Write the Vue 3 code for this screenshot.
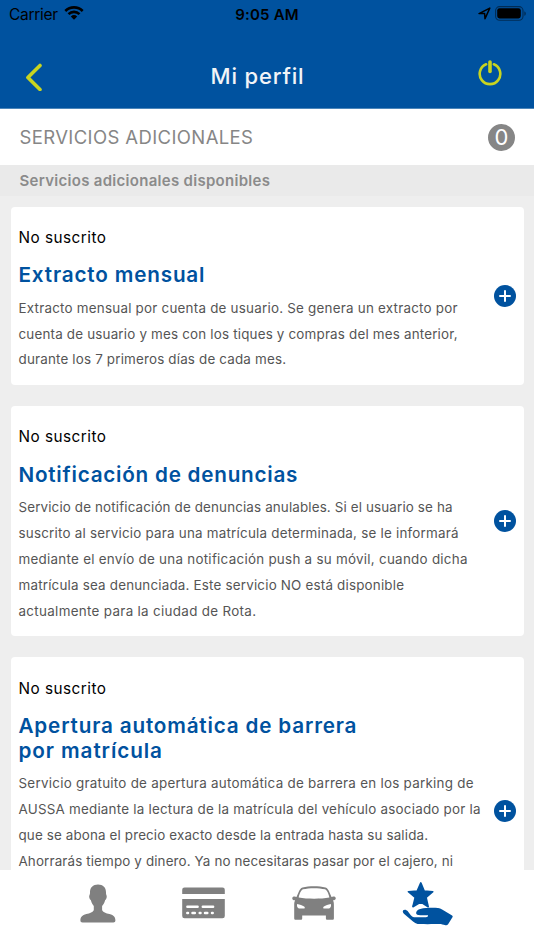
<template>
  <div class="screen">
    <header class="header">
      <div class="status-bar">
        <div class="carrier">
          <span v-fit="49">Carrier</span>
          <svg width="20" height="15" viewBox="0 0 20 15">
            <path d="M.4 4.900a13.600 13.600 0 0 1 19.200 0l-1.800 2a11.200 11.200 0 0 0-15.600 0z" />
            <path d="M3.600 8.200a9.100 9.100 0 0 1 12.800 0l-1.800 1.900a6.700 6.700 0 0 0-9.200 0z" />
            <path d="M6.800 11.400a4.700 4.700 0 0 1 6.400 0L10 14.700z" />
          </svg>
        </div>
        <span v-fit="63.5" class="time">9:05 AM</span>
        <div class="indicators">
          <svg width="13" height="13" viewBox="0 0 13 13">
            <path d="M1 6.600 11.800 1.100 7 11.800 6.600 6.600Z" fill="none" stroke="#000" stroke-width="1.5" stroke-linejoin="round" />
          </svg>
          <svg width="32" height="15" viewBox="0 0 32 15">
            <rect x=".6" y=".6" width="27.4" height="13.6" rx="4" fill="none" stroke="#002c55" stroke-width="1.1" />
            <rect x="2.2" y="2.2" width="23.6" height="10.2" rx="2.3" />
            <path d="M29.300 5.200c2 .8 2 3.800 0 4.600z" fill="#002c55" />
          </svg>
        </div>
      </div>
      <div class="nav-bar">
        <svg class="back" width="18" height="28" viewBox="0 0 18 28">
          <path d="M15 2.500 2.900 14.500 15 26.500" />
        </svg>
        <h1><span v-fit="93">Mi perfil</span></h1>
        <svg class="power" width="24" height="28" viewBox="0 0 24 28">
          <path d="M8.100 5.300a10.300 10.300 0 1 0 7.800 0" stroke-width="2.6" />
          <path d="M12 3v9.500" stroke-width="3.6" />
        </svg>
      </div>
    </header>

    <section class="summary">
      <h2><span v-fit="233.5">SERVICIOS ADICIONALES</span></h2>
      <span class="count">0</span>
    </section>
    <div class="section-label">
      <span v-fit="250.5">Servicios adicionales disponibles</span>
    </div>

    <main class="services">
      <article
        v-for="service in services"
        :key="service.id"
        class="card"
        :class="{ tall: service.tall }"
      >
        <div class="card-body">
          <p class="status"><span v-fit="87.5">No suscrito</span></p>
          <h3>
            <span v-for="line in service.title" :key="line.text" class="line">
              <span v-fit="line.width">{{ line.text }}</span>
            </span>
          </h3>
          <p class="description">
            <span v-for="line in service.description" :key="line.text" class="line">
              <span v-fit="line.width">{{ line.text }}</span>
            </span>
          </p>
        </div>
        <button class="add" type="button">
          <svg width="22" height="22" viewBox="0 0 22 22">
            <circle cx="11" cy="11" r="11" />
            <path d="M11 6v10M6 11h10" />
          </svg>
        </button>
      </article>
    </main>

    <nav class="tab-bar">
      <svg class="tab" width="36" height="39" viewBox="0 0 36 39">
        <path d="M18 .5c5 0 8.200 3 8 8.300 0 1.200.2 1.700.4 2.300.8 1.500.2 4.300-1.300 5.100-.6 2.600-1.600 4.200-3 5.700v4c.7 2.300 3.900 3.200 7.400 4.200 4.400 1.200 5.900 3.100 5.900 6.400 0 1.200-.8 2-2 2H2.500c-1.400 0-2.100-.8-2.100-2 0-3.300 1.600-5.200 6-6.400 3.500-1 6.700-1.900 7.400-4.200v-4c-1.300-1.500-2.300-3.100-2.900-5.700-1.500-.8-2.200-3.600-1.400-5.100.3-.6.500-1.100.5-2.300C9.800 3.500 13 .5 18 .5z" />
      </svg>
      <svg class="tab" width="43" height="32" viewBox="0 0 43 32">
        <path d="M2.500.5h38a2.300 2.300 0 0 1 2.300 2.300V7H.2V2.800A2.300 2.300 0 0 1 2.500.5zM.2 12h42.600v17a2.300 2.300 0 0 1-2.300 2.300h-38A2.300 2.300 0 0 1 .2 29z" />
        <path class="detail" d="M5.400 19.800h10.200M20.800 19.800h10.300M5.300 26h.7M10.500 26h2.300M17.700 26h.8M23 26h2.300M30 26h.7" />
      </svg>
      <svg class="tab" width="44" height="35" viewBox="0 0 44 35">
        <path
          fill-rule="evenodd"
          d="M10.500 1.400C17-.2 27-.2 33.500 1.400c1.800.6 2.700 2 3.400 3.700l2.600 6c1.500-.9 3.900-.6 4.200 1 .3 1.700-1 2.200-2.700 2.200.8 1.600.9 3 .9 5v12.900c0 1-.5 1.600-1.500 1.600h-5c-1 0-1.500-.6-1.500-1.600V29.500H10.200v2.700c0 1-.5 1.600-1.500 1.600h-5c-1 0-1.500-.6-1.500-1.600V19.300c0-2 .1-3.400.9-5-1.700 0-3.100-.5-2.800-2.200.3-1.600 2.700-1.900 4.200-1l2.600-6c.7-1.700 1.600-3.100 3.400-3.700zM11 3.300c-2.200.8-3.700 5.300-4.300 8.300 8.800 1.600 21.900 1.600 30.700 0-.7-3-2.100-7.500-4.400-8.300-6-1.500-16-1.500-22 0zM5.200 18c-.8 2.600.6 4.600 3 4.600h3.300c1.500 0 1.700-1.300.6-2.100C10.300 19.200 7.900 18.500 5.200 18zM38.800 18c.8 2.600-.6 4.600-3 4.600h-3.300c-1.500 0-1.700-1.300-.6-2.100 1.800-1.300 4.200-2 6.900-2.500z"
        />
      </svg>
      <svg class="tab active" width="51" height="45" viewBox="0 0 51 45">
        <path d="M18.800.9 22.200 9.100l8.600.6-6.700 5.800 2.100 9.200-7.400-4.600-7.900 4.600 2.300-9.200-6.800-5.800 8.800-.6z" stroke="#00529f" stroke-width="1.6" stroke-linejoin="round" />
        <path d="M1.200 28.300c1.400-1.200 3.300-.5 4.400.8l3.200 4.100c1.500 1.800 2.800 2.100 4.800 2.100l10.300-.1c1.500 0 2.200-.9 2.200-2h-7.700c-2.700 0-4.300-.7-4.300-2.200 0-1.800 1.800-3.600 4.200-4.100 4.800-1 10.100-1.300 17.700-1 1.700.1 2.700.8 4.100 1.600l10 6.100c.6.400.8.900.5 1.500l-4.500 7.200c-.7 1-1.500 1.200-2.600 1-2.500-.5-4-1.200-5.900-1.200-4.400 0-11.600.3-19.700 0-3.300-.1-5.300-1.300-7.500-3.200l-8.500-7.200c-1.200-1-1.400-2.600-.7-3.400z" />
      </svg>
    </nav>
  </div>
</template>

<script setup>
// Tracks the letters so that a line takes up the given width.
const vFit = {
  mounted(el, { value }) {
    const natural = el.getBoundingClientRect().width;
    const spacing = (value - natural) / (el.textContent.length - 1);
    el.style.letterSpacing = `${spacing}px`;
  },
};

const services = [
  {
    id: 'extracto',
    title: [{ text: 'Extracto mensual', width: 186 }],
    description: [
      { text: 'Extracto mensual por cuenta de usuario. Se genera un extracto por', width: 439 },
      { text: 'cuenta de usuario y mes con los tiques y compras del mes anterior,', width: 439 },
      { text: 'durante los 7 primeros días de cada mes.', width: 267.5 },
    ],
  },
  {
    id: 'denuncias',
    title: [{ text: 'Notificación de denuncias', width: 279 }],
    description: [
      { text: 'Servicio de notificación de denuncias anulables. Si el usuario se ha', width: 434 },
      { text: 'suscrito al servicio para una matrícula determinada, se le informará', width: 440 },
      { text: 'mediante el envío de una notificación push a su móvil, cuando dicha', width: 449 },
      { text: 'matrícula sea denunciada. Este servicio NO está disponible', width: 385.5 },
      { text: 'actualmente para la ciudad de Rota.', width: 237.5 },
    ],
  },
  {
    id: 'barrera',
    tall: true,
    title: [
      { text: 'Apertura automática de barrera', width: 338 },
      { text: 'por matrícula', width: 143.5 },
    ],
    description: [
      { text: 'Servicio gratuito de apertura automática de barrera en los parking de', width: 455 },
      { text: 'AUSSA mediante la lectura de la matrícula del vehículo asociado por la', width: 462 },
      { text: 'que se abona el precio exacto desde la entrada hasta su salida.', width: 409.5 },
      { text: 'Ahorrarás tiempo y dinero. Ya no necesitaras pasar por el cajero, ni', width: 434.5 },
    ],
  },
];
</script>

<style>
body {
  margin: 0;
  overflow: hidden;
}
</style>

<style scoped>
.screen {
  display: flex;
  flex-direction: column;
  height: 950px;
  overflow: hidden;
  background: #eeeeee;
  font-family: Inter, 'Liberation Sans', sans-serif;
}

h1,
h2,
h3,
p {
  margin: 0;
}

span {
  white-space: nowrap;
}

svg {
  display: block;
  flex-shrink: 0;
}

.header {
  box-sizing: border-box;
  flex: 0 0 109px;
  background: #00529f;
  border-bottom: 1px solid #4c86ba;
}

.status-bar {
  display: grid;
  grid-template-columns: 1fr auto 1fr;
  align-items: center;
  height: 28px;
  padding: 0 7px 0 9px;
  font-size: 15.5px;
}

.carrier,
.indicators {
  display: flex;
  align-items: center;
}

.carrier {
  gap: 6px;
}

.carrier svg {
  margin-top: -3px;
}

.time {
  margin-left: -2px;
  font-weight: 600;
  font-size: 15px;
}

.indicators {
  justify-content: flex-end;
  gap: 4px;
}

.indicators svg {
  margin-top: -1px;
}

.nav-bar {
  display: grid;
  grid-template-columns: 1fr auto 1fr;
  align-items: center;
  height: 80px;
  padding: 0 32px 0 25px;
  color: #f2f4f7;
}

.nav-bar h1 {
  margin: 15px 0 0 -12px;
  font-size: 22px;
  font-weight: 500;
  line-height: 26px;
}

.back,
.power {
  fill: none;
  stroke: #c8d420;
}

.back {
  margin-top: 18px;
  stroke-width: 3.6;
  stroke-linecap: round;
  stroke-linejoin: round;
}

.power {
  justify-self: end;
  margin-top: 10px;
  stroke-linecap: round;
}

.summary {
  display: flex;
  flex: 0 0 56px;
  align-items: center;
  justify-content: space-between;
  padding: 0 19px 0 19.5px;
  background: #fff;
}

.summary h2 {
  color: #868686;
  font-size: 18.5px;
  font-weight: 400;
}

.count {
  width: 27px;
  height: 27px;
  border-radius: 50%;
  background: #868686;
  color: #fff;
  font-size: 22px;
  line-height: 27px;
  text-align: center;
}

.section-label {
  flex: none;
  padding: 1px 0 0 19.5px;
  background: #eaeaea;
  color: #8b8b8b;
  font-size: 15px;
  font-weight: 600;
  line-height: 30px;
}

.services {
  display: flex;
  flex: 1;
  flex-direction: column;
  gap: 21px;
  min-height: 0;
  padding: 10.8px 10.5px 0;
  overflow: hidden;
}

.card {
  box-sizing: border-box;
  display: flex;
  flex-shrink: 0;
  align-items: center;
  justify-content: space-between;
  padding: 21.2px 8px 12px;
  border-radius: 4px;
  background: #fff;
}

.card.tall {
  align-items: flex-start;
  min-height: 307px;
}

.card.tall .add {
  align-self: center;
}

.status {
  margin-bottom: 14.3px;
  color: #000;
  font-size: 15.3px;
  line-height: 20px;
}

.line {
  display: block;
}

.card h3 {
  margin-bottom: 8.6px;
  color: #00529f;
  font-size: 20.7px;
  font-weight: 600;
  line-height: 25px;
}

.description {
  color: #555;
  font-size: 13.4px;
  line-height: 25.8px;
}

.card-body {
  flex: 1;
  min-width: 0;
}

.add {
  margin: 0 0 9px;
  padding: 0;
  border: 0;
  background: none;
}

.add circle {
  fill: #00529f;
}

.add path {
  fill: none;
  stroke: #fff;
  stroke-width: 2;
  stroke-linecap: round;
}

.tab-bar {
  box-sizing: border-box;
  display: flex;
  flex: 0 0 80px;
  align-items: flex-start;
  justify-content: space-between;
  padding: 12px 81px 0 80px;
  background: #fff;
}

.tab {
  fill: #808080;
}

.tab:nth-child(1) {
  margin-top: 2px;
}

.tab:nth-child(2) {
  margin-top: 5px;
}

.tab:nth-child(3) {
  margin-top: 4px;
}

.tab.active {
  fill: #00529f;
}

.detail {
  fill: none;
  stroke: #fff;
  stroke-width: 2.5;
  stroke-linecap: round;
}
</style>
